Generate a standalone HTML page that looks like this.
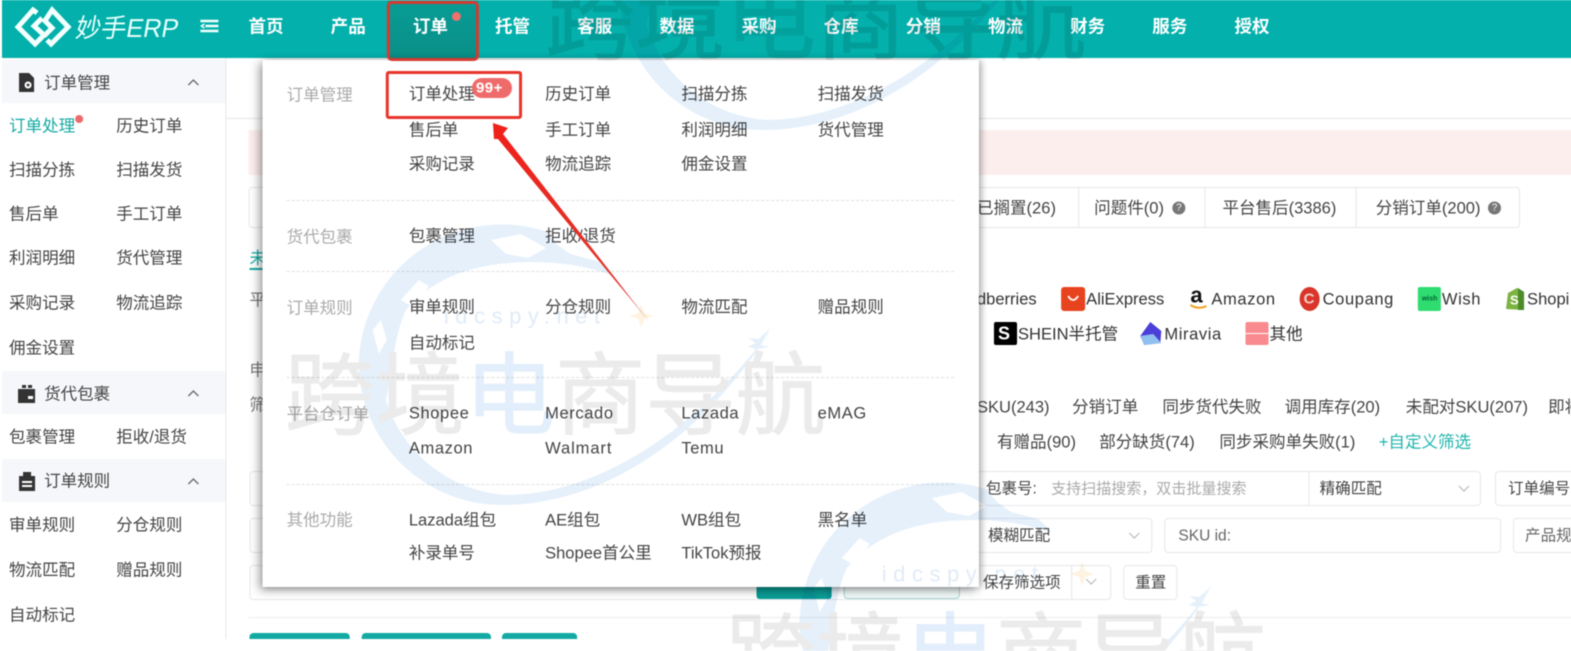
<!DOCTYPE html>
<html lang="zh"><head><meta charset="utf-8"><title>妙手ERP</title>
<style>
html,body{margin:0;padding:0;background:#fff;width:1571px;height:651px;overflow:hidden}
#w{position:relative;width:1571px;height:651px;overflow:hidden;background:#fff;filter:blur(.55px);transform:scaleX(1.002);transform-origin:0 0;font:16.5px/20px "Liberation Sans","Noto Sans CJK SC",sans-serif;color:#444}
#w b,#w i,#w u,#w s{position:absolute;white-space:nowrap;font-style:normal;text-decoration:none;font-weight:400}
#w i{transform:translateY(1.5px)}
#w b{display:block}
#w i.n{color:#fff;font-weight:700;top:16px;font-size:17.5px;transform:translateY(.5px)}
.l{color:#aaa}
.e{letter-spacing:.6px}
.g{background:#f5f7fa;left:2px;width:223px;height:43px}
.bx{border:1px solid #e4e7ed;border-radius:4px;box-sizing:border-box}
.d{left:286px;width:666px;border-top:1px dashed #e0e0e0;height:0}
.q{width:13px;height:13px;border-radius:50%;background:#777;color:#fff!important;font:700 10px/13px "Liberation Sans",sans-serif;text-align:center}
.ph{color:#aaa}
#w i.wm{position:absolute;font:90px/90px "Noto Sans CJK SC",sans-serif;-webkit-text-stroke:1px #ebebeb;color:#ebebeb;transform:none}
#w i.wm span{color:#e2eefb;-webkit-text-stroke:1px #e2eefb}
#w i.wm.c{height:48px;overflow:hidden}
#w i.wm.bl{color:#e2eefb;-webkit-text-stroke-color:#e2eefb}
</style></head><body><div id="w">

<!-- header -->
<b style="left:2px;top:0;width:1569px;height:58px;background:#03b0ab"></b>
<b style="left:387px;top:0;width:90px;height:58px;background:linear-gradient(#079d96,#0a8f88)"></b>
<svg style="position:absolute;left:0;top:0" width="230" height="58" fill="none" stroke="#f2fffd" stroke-width="5">
<path d="M37 13 33 10 18 27 35 44 44 35 34 26 42 18"/><path d="M44 22 52 10 68 27 51 44 47 40"/><path d="M44 36 52 28 43 19"/>
<path d="M200 21H218M205 26H218M200 31H218" stroke-width="2.6"/><path d="M204 24 201 26 204 28" stroke-width="1.5"/>
</svg>
<i style="left:76px;top:12px;color:#eafffc;font-size:26px;line-height:32px;transform:skewX(-10deg) scaleX(.97);transform-origin:0 50%">妙手ERP</i>
<i class="n" style="left:248px">首页</i><i class="n" style="left:330px">产品</i><i class="n" style="left:412px">订单</i><i class="n" style="left:494px">托管</i><i class="n" style="left:576px">客服</i><i class="n" style="left:658px">数据</i><i class="n" style="left:740px">采购</i><i class="n" style="left:822px">仓库</i><i class="n" style="left:904px">分销</i><i class="n" style="left:986px">物流</i><i class="n" style="left:1068px">财务</i><i class="n" style="left:1150px">服务</i><i class="n" style="left:1232px">授权</i>
<b style="left:451px;top:12px;width:9px;height:9px;border-radius:50%;background:#f0706c"></b>

<!-- sidebar -->
<b style="left:225px;top:58px;width:1px;height:581px;background:#e6e8ec"></b>
<b class="g" style="top:60px"></b><b class="g" style="top:371px"></b><b class="g" style="top:459px"></b>
<svg style="position:absolute;left:0;top:60px" width="225" height="440" fill="#333">
<path d="M19 13h10l5 5v14H19z"/><circle cx="28" cy="25" r="3.5" fill="#fff"/><circle cx="28" cy="25" r="1.4"/>
<path d="M18 329h17v14H18zM22 325h4v3h-4zM28 325h4v3h-4z"/><path d="M28 336h5v3h-5z" fill="#fff"/>
<path d="M19 416h16v15H19zM23 412h8v4h-8z"/><path d="M22 421h10v2H22zM22 425h10v2H22z" fill="#fff"/>
<path d="M188 25l5-5 5 5M188 336l5-5 5 5M188 424l5-5 5 5" fill="none" stroke="#666" stroke-width="1.3"/>
</svg>
<i style="left:44px;top:72px">订单管理</i><i style="left:44px;top:383px">货代包裹</i><i style="left:44px;top:470px">订单规则</i>
<i style="left:9px;top:115px;color:#14aaa4">订单处理</i><b style="left:75px;top:115px;width:8px;height:8px;border-radius:50%;background:#ef6b6b"></b><i style="left:116px;top:115px">历史订单</i>
<i style="left:9px;top:159px">扫描分拣</i><i style="left:116px;top:159px">扫描发货</i>
<i style="left:9px;top:203px">售后单</i><i style="left:116px;top:203px">手工订单</i>
<i style="left:9px;top:247px">利润明细</i><i style="left:116px;top:247px">货代管理</i>
<i style="left:9px;top:292px">采购记录</i><i style="left:116px;top:292px">物流追踪</i>
<i style="left:9px;top:337px">佣金设置</i>
<i style="left:9px;top:426px">包裹管理</i><i style="left:116px;top:426px">拒收/退货</i>
<i style="left:9px;top:514px">审单规则</i><i style="left:116px;top:514px">分仓规则</i>
<i style="left:9px;top:559px">物流匹配</i><i style="left:116px;top:559px">赠品规则</i>
<i style="left:9px;top:604px">自动标记</i>

<!-- content -->
<b style="left:226px;top:118px;width:1345px;height:1px;background:#e6e6e6"></b>
<b style="left:248px;top:130px;width:1323px;height:45px;background:#fdeeee"></b>
<b class="bx" style="left:248px;top:187px;width:1269px;height:41px"></b>
<b style="left:1076px;top:187px;width:1px;height:41px;background:#e4e7ed"></b><b style="left:1202px;top:187px;width:1px;height:41px;background:#e4e7ed"></b><b style="left:1353px;top:187px;width:1px;height:41px;background:#e4e7ed"></b>
<i style="left:975px;top:197px">已搁置(26)</i><i style="left:1092px;top:197px">问题件(0)</i><i class="q" style="left:1170px;top:200px">?</i><i style="left:1220px;top:197px">平台售后(3386)</i><i style="left:1373px;top:197px">分销订单(200)</i><i class="q" style="left:1485px;top:200px">?</i>
<i style="left:249px;top:247px;color:#14aaa4">未</i><b style="left:249px;top:268px;width:14px;height:2px;background:#14aaa4"></b>
<i style="left:249px;top:289px;color:#777">平</i><i style="left:249px;top:359px;color:#777">申</i><i style="left:249px;top:394px;color:#777">筛</i>

<i style="left:975px;top:288px;color:#333">dberries</i>
<b style="left:1059px;top:287px;width:24px;height:24px;background:#e8431f;border-radius:3px"></b><svg style="position:absolute;left:1059px;top:287px" width="24" height="24" fill="none" stroke="#fff" stroke-width="1.8"><path d="M7 9q5 8 10 0"/></svg>
<i style="left:1084px;top:288px;color:#333">AliExpress</i>
<i style="left:1188px;top:284px;color:#111;font-weight:700;font-size:22px">a</i><svg style="position:absolute;left:1186px;top:303px" width="22" height="8" fill="none" stroke="#f0a020" stroke-width="2"><path d="M2 2q8 5 16 1"/></svg>
<i class="e" style="left:1209px;top:288px;color:#333">Amazon</i>
<b style="left:1297px;top:287px;width:20px;height:24px;border-radius:50%;background:#d9352a"></b><i style="left:1301px;top:288px;color:#f6d0cc;font-weight:700;font-size:15px">C</i>
<i class="e" style="left:1320px;top:288px;color:#333">Coupang</i>
<b style="left:1415px;top:287px;width:23px;height:24px;background:#2fdc70;border-radius:2px"></b><i style="left:1419px;top:288px;color:#063;font-size:7px;font-weight:700">wish</i>
<i class="e" style="left:1439px;top:288px;color:#333">Wish</i>
<svg style="position:absolute;left:1502px;top:287px" width="20" height="24"><path d="M3 6 12 1 19 5V23L1 22z" fill="#7cb342"/><path d="M13 1 19 5V23L13 23z" fill="#4d8a2a"/></svg><i style="left:1507px;top:291px;color:#fff;font-size:13px;font-weight:700;line-height:16px">S</i>
<i style="left:1524px;top:288px;color:#333">Shopi</i>

<b style="left:992px;top:322px;width:23px;height:23px;background:#000;border-radius:2px"></b><i style="left:996px;top:322px;color:#fff;font-weight:700;font-size:18px">S</i>
<i style="left:1016px;top:323px;color:#333">SHEIN半托管</i>
<svg style="position:absolute;left:1137px;top:321px" width="23" height="24"><path d="M11 1 22 10 21 22 5 24 1 15z" fill="#4a3fd8"/><path d="M1 15 14 13 22 22 5 24z" fill="#8fc0f0"/></svg>
<i class="e" style="left:1162px;top:323px;color:#333">Miravia</i>
<b style="left:1243px;top:322px;width:23px;height:23px;background:#f98a8f;border-radius:2px"></b><b style="left:1243px;top:333px;width:23px;height:1px;background:#fff"></b>
<i style="left:1267px;top:323px;color:#333">其他</i>

<i style="left:975px;top:396px">SKU(243)</i><i style="left:1070px;top:396px">分销订单</i><i style="left:1160px;top:396px">同步货代失败</i><i style="left:1282px;top:396px">调用库存(20)</i><i style="left:1403px;top:396px">未配对SKU(207)</i><i style="left:1545px;top:396px">即将</i>
<i style="left:995px;top:431px">有赠品(90)</i><i style="left:1097px;top:431px">部分缺货(74)</i><i style="left:1217px;top:431px">同步采购单失败(1)</i><i style="left:1376px;top:431px;color:#22b5ae">+自定义筛选</i>

<!-- filter boxes -->
<b class="bx" style="left:249px;top:471px;width:1229px;height:35px"></b><b style="left:1306px;top:471px;width:1px;height:35px;background:#e4e7ed"></b>
<i style="left:984px;top:478px;font-size:15.5px">包裹号:</i><i class="ph" style="left:1049px;top:478px;font-size:15px">支持扫描搜索，双击批量搜索</i><i style="left:1317px;top:478px;font-size:15.5px">精确匹配</i>
<b class="bx" style="left:1492px;top:471px;width:90px;height:35px"></b><i style="left:1505px;top:478px;font-size:15.5px">订单编号</i>
<b class="bx" style="left:249px;top:518px;width:901px;height:35px"></b><i style="left:986px;top:525px;font-size:15.5px">模糊匹配</i>
<b class="bx" style="left:1162px;top:518px;width:336px;height:35px"></b><i style="left:1176px;top:525px;font-size:15.5px;color:#666">SKU id:</i>
<b class="bx" style="left:1510px;top:518px;width:70px;height:35px"></b><i style="left:1522px;top:525px;font-size:15.5px;color:#666">产品规</i>
<svg style="position:absolute;left:0;top:0" width="1571" height="651" fill="none" stroke="#bbb" stroke-width="1.2"><path d="M1456 486l5 5 5-5M1127 533l5 5 5-5M1084 579l5 5 5-5"/></svg>
<b class="bx" style="left:249px;top:565px;width:860px;height:35px"></b><b style="left:1069px;top:565px;width:1px;height:35px;background:#e4e7ed"></b><i style="left:981px;top:572px;font-size:15.5px">保存筛选项</i>
<b class="bx" style="left:1121px;top:565px;width:54px;height:35px"></b><i style="left:1133px;top:572px;font-size:15.5px">重置</i>
<b style="left:755px;top:570px;width:75px;height:29px;background:#0a9d95;border-radius:0 0 3px 3px"></b>
<b class="bx" style="left:842px;top:570px;width:116px;height:29px;border-color:#a5d8d2;background:#f2fafa"></b>
<b style="left:248px;top:617px;width:1323px;height:1px;background:#ececec"></b>
<b style="left:249px;top:633px;width:100px;height:6px;background:#14aaa4;border-radius:4px 4px 0 0"></b>
<b style="left:361px;top:633px;width:129px;height:6px;background:#14aaa4;border-radius:4px 4px 0 0"></b>
<b style="left:501px;top:633px;width:75px;height:6px;background:#14aaa4;border-radius:4px 4px 0 0"></b>

<!-- dropdown -->
<b style="left:262px;top:60px;width:715px;height:527px;background:#fff;box-shadow:-3px 3px 9px rgba(0,0,0,.38),3px 0 6px rgba(0,0,0,.22)"></b>
<b class="d" style="top:200px"></b><b class="d" style="top:271px"></b><b class="d" style="top:377px"></b><b class="d" style="top:484px"></b>
<i class="l" style="left:286px;top:84px">订单管理</i><i class="l" style="left:286px;top:226px">货代包裹</i><i class="l" style="left:286px;top:297px">订单规则</i><i class="l" style="left:286px;top:403px">平台仓订单</i><i class="l" style="left:286px;top:509px">其他功能</i>
<i style="left:408px;top:83px">订单处理</i><i style="left:544px;top:83px">历史订单</i><i style="left:680px;top:83px">扫描分拣</i><i style="left:816px;top:83px">扫描发货</i>
<i style="left:408px;top:119px">售后单</i><i style="left:544px;top:119px">手工订单</i><i style="left:680px;top:119px">利润明细</i><i style="left:816px;top:119px">货代管理</i>
<i style="left:408px;top:153px">采购记录</i><i style="left:544px;top:153px">物流追踪</i><i style="left:680px;top:153px">佣金设置</i>
<i style="left:408px;top:225px">包裹管理</i><i style="left:544px;top:225px">拒收/退货</i>
<i style="left:408px;top:296px">审单规则</i><i style="left:544px;top:296px">分仓规则</i><i style="left:680px;top:296px">物流匹配</i><i style="left:816px;top:296px">赠品规则</i>
<i style="left:408px;top:332px">自动标记</i>
<i class="e" style="left:408px;top:402px">Shopee</i><i class="e" style="left:544px;top:402px">Mercado</i><i class="e" style="left:680px;top:402px">Lazada</i><i class="e" style="left:816px;top:402px">eMAG</i>
<i class="e" style="left:408px;top:437px">Amazon</i><i class="e" style="left:544px;top:437px;letter-spacing:.9px">Walmart</i><i class="e" style="left:680px;top:437px">Temu</i>
<i style="left:408px;top:509px">Lazada组包</i><i style="left:544px;top:509px">AE组包</i><i style="left:680px;top:509px">WB组包</i><i style="left:816px;top:509px">黑名单</i>
<i style="left:408px;top:542px">补录单号</i><i style="left:544px;top:542px">Shopee首公里</i><i style="left:680px;top:542px">TikTok预报</i>

<!-- watermarks -->
<div style="position:absolute;left:0;top:0;width:1571px;height:651px;overflow:hidden;mix-blend-mode:multiply;pointer-events:none">
<svg style="position:absolute;left:0;top:0" width="1571" height="651">
<defs><g id="gl">
<path fill="#e5f0fb" d="M610 275A143 143 0 0 0 358 362A143 143 0 0 0 501 505C600 505 700 440 769 330C700 425 600 495 505 495A135 135 0 0 1 385 400C392 370 392 340 405 310Q445 262 530 262Q575 262 610 275Z"/>
<path fill="#fff" d="M490 240l30-6 25 14-18 10-22-4zM545 232l32 6 22 24-30-8-14-10zM400 300l18-20 10 6-14 22zM372 330l8-10 6 20-8 14z"/>
<path fill="#e5f0fb" d="M769 328 758 345 768 347 755 349 746 347 754 343 747 338 757 339z"/>
<path fill="#fdf3e0" d="M640 304l3 9 9 3-9 3-3 9-3-9-9-3 9-3z"/>
</g></defs>
<use href="#gl"/><use href="#gl" x="440" y="258"/><use href="#gl" x="260" y="-375"/>
</svg>
<i class="wm" style="left:284px;top:343px">跨境<span>电</span>商导航</i>
<i class="wm c" style="left:724px;top:603px">跨境</i><i class="wm c bl" style="left:904px;top:603px">电</i><i class="wm c" style="left:994px;top:603px">商导航</i>
<i class="wm" style="left:544px;top:-32px;color:#e4e4e4;-webkit-text-stroke-color:#e4e4e4">跨境<span style="color:#e0eaea;-webkit-text-stroke-color:#e0eaea">电</span>商导航</i>
<i style="left:443px;top:303px;font:22px/24px 'Liberation Sans',sans-serif;letter-spacing:6.5px;color:#e0ebf7">idcspy.net</i>
<i style="left:880px;top:561px;font:22px/24px 'Liberation Sans',sans-serif;letter-spacing:6.5px;color:#e0ebf7">idcspy.net</i>
</div>

<!-- annotations -->
<b style="left:386px;top:1px;width:92px;height:60px;box-sizing:border-box;border:3px solid #d63a30;border-radius:5px"></b>
<b style="left:385px;top:71px;width:136px;height:48px;box-sizing:border-box;border:3px solid #e8352b;border-radius:3px"></b>
<b style="left:471px;top:78px;width:40px;height:20px;border-radius:10px;background:#ef6b6b"></b><i style="left:475px;top:77px;color:#fff;font-size:15px;letter-spacing:.5px;font-weight:700">99+</i>
<svg style="position:absolute;left:0;top:0" width="1571" height="651"><defs><linearGradient id="ar" x1="492" y1="123" x2="648" y2="322" gradientUnits="userSpaceOnUse"><stop offset="0" stop-color="#f0201a"/><stop offset=".8" stop-color="#e0352c"/><stop offset="1" stop-color="#f0a8a0"/></linearGradient></defs>
<path fill="url(#ar)" d="M492 123 507 128 502 134 649 323 497 139 493 139z"/></svg>
</div></body></html>
